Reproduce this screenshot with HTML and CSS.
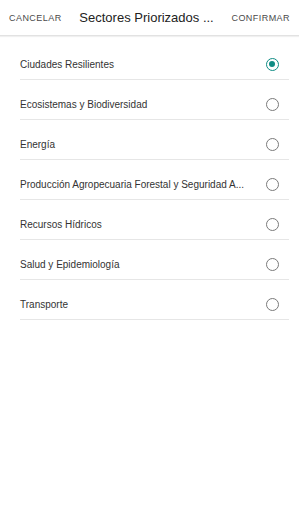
FILE: index.html
```html
<!DOCTYPE html>
<html lang="es">
<head>
<meta charset="utf-8">
<link rel="stylesheet" href="styles.css">
</head>
<body>
<div class="app">
  <header class="bar">
    <span class="btn">CANCELAR</span>
    <span class="title">Sectores Priorizados ...</span>
    <span class="btn">CONFIRMAR</span>
  </header>
  <ul class="list">
    <li class="row"><span class="label">Ciudades Resilientes</span><span class="radio checked"></span></li>
    <li class="row"><span class="label">Ecosistemas y Biodiversidad</span><span class="radio"></span></li>
    <li class="row"><span class="label">Energía</span><span class="radio"></span></li>
    <li class="row"><span class="label">Producción Agropecuaria Forestal y Seguridad A...</span><span class="radio"></span></li>
    <li class="row"><span class="label">Recursos Hídricos</span><span class="radio"></span></li>
    <li class="row"><span class="label">Salud y Epidemiología</span><span class="radio"></span></li>
    <li class="row"><span class="label">Transporte</span><span class="radio"></span></li>
  </ul>
</div>
</body>
</html>
```
FILE: styles.css
```css
* { box-sizing: border-box; }
html, body { margin: 0; padding: 0; background: #fff; }
body { font-family: "Liberation Sans", Arial, sans-serif; color: #222; }
.app { width: 299px; height: 512px; }
.bar {
  height: 36px;
  display: flex;
  align-items: center;
  justify-content: space-between;
  padding: 0 9px 0 9px;
  border-bottom: 1px solid #e2e2e2;
  box-shadow: 0 1px 1px rgba(0,0,0,0.06);
}
.btn { font-size: 9px; letter-spacing: 0.45px; color: #4a4a4a; }
.title { font-size: 13px; color: #222; }
.list { list-style: none; margin: 0; padding: 4px 10px 0 20px; }
.row {
  height: 40px;
  display: flex;
  align-items: center;
  justify-content: space-between;
  padding: 9px 10px 0 0;
  border-bottom: 1px solid #e6e6e6;
}
.label { font-size: 10px; color: #333; white-space: nowrap; }
.radio {
  width: 13px; height: 13px;
  border: 1.2px solid #7a7a7a;
  border-radius: 50%;
  flex: none;
  position: relative;
}
.radio.checked { border-color: #0f8c84; }
.radio.checked::after {
  content: "";
  position: absolute;
  left: 2.1px; top: 2.1px;
  width: 6.4px; height: 6.4px;
  border-radius: 50%;
  background: #0f8c84;
}
```
